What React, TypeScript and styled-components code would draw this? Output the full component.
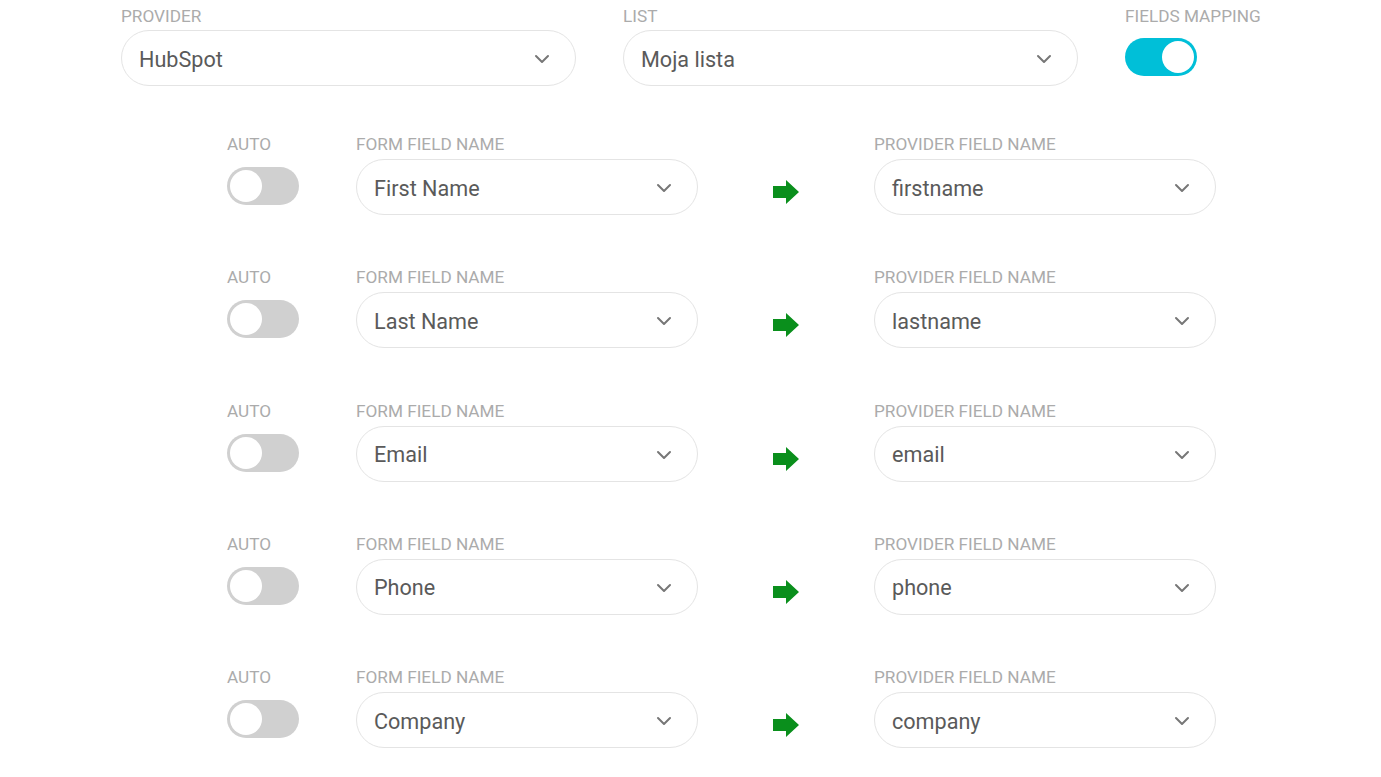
import React from 'react';
import styled, { createGlobalStyle } from 'styled-components';

const GlobalStyle = createGlobalStyle`
    html, body {
        margin: 0;
        padding: 0;
        background: #fff;
        font-family: Roboto, "Liberation Sans", Arial, sans-serif;
    }
`;

const mappings = [
    { form: 'First Name', provider: 'firstname' },
    { form: 'Last Name', provider: 'lastname' },
    { form: 'Email', provider: 'email' },
    { form: 'Phone', provider: 'phone' },
    { form: 'Company', provider: 'company' },
];

function Chevron() {
    return (
        <svg width="16" height="10" viewBox="0 0 16 10" fill="none">
            <path
                d="M2 2 L8 8 L14 2"
                stroke="#777"
                strokeWidth="2"
                strokeLinecap="round"
                strokeLinejoin="round"
            />
        </svg>
    );
}

function Arrow() {
    return (
        <svg width="26" height="24" viewBox="0 0 26 24">
            <path d="M0 6 H13 V0 L26 12 L13 24 V18 H0 Z" fill="#0a8f1c" />
        </svg>
    );
}

function Select({ value }: { value: string }) {
    return (
        <SelectBox>
            <SelectValue>{value}</SelectValue>
            <Chevron />
        </SelectBox>
    );
}

export default function App() {
    return (
        <Page>
            <GlobalStyle />
            <TopRow>
                <Field $width={455}>
                    <Label>Provider</Label>
                    <Select value="HubSpot" />
                </Field>
                <Field $width={455}>
                    <Label>List</Label>
                    <Select value="Moja lista" />
                </Field>
                <Field>
                    <Label>Fields mapping</Label>
                    <ToggleSlot>
                        <Toggle $on />
                    </ToggleSlot>
                </Field>
            </TopRow>
            <MappingList>
                {mappings.map((m) => (
                    <MappingRow key={m.form}>
                        <Field $width={129}>
                            <Label $tight>Auto</Label>
                            <ToggleSlot>
                                <Toggle />
                            </ToggleSlot>
                        </Field>
                        <Field $width={342}>
                            <Label $tight>Form field name</Label>
                            <Select value={m.form} />
                        </Field>
                        <ArrowCell>
                            <Arrow />
                        </ArrowCell>
                        <Field $width={342}>
                            <Label $tight>Provider field name</Label>
                            <Select value={m.provider} />
                        </Field>
                    </MappingRow>
                ))}
            </MappingList>
        </Page>
    );
}

const Page = styled.div`
    width: 1381px;
    height: 777px;
    overflow: hidden;
    padding-top: 6px;
    box-sizing: border-box;
`;

const TopRow = styled.div`
    display: flex;
    gap: 47px;
    padding-left: 121px;
`;

const Field = styled.div<{ $width?: number }>`
    display: flex;
    flex-direction: column;
    flex: none;
    width: ${(p) => (p.$width ? `${p.$width}px` : 'auto')};
`;

const Label = styled.div<{ $tight?: boolean }>`
    font-size: 17.2px;
    line-height: 20px;
    color: #ababab;
    text-transform: uppercase;
    margin-bottom: ${(p) => (p.$tight ? 5 : 4)}px;
    white-space: nowrap;
`;

const SelectBox = styled.div`
    height: 56px;
    box-sizing: border-box;
    border: 1px solid #e4e4e4;
    border-radius: 28px;
    background: #fff;
    display: flex;
    align-items: center;
    justify-content: space-between;
    padding: 2px 25px 0 17px;
`;

const SelectValue = styled.span`
    font-size: 21.6px;
    color: #5a5a5a;
`;

const ToggleSlot = styled.div`
    height: 56px;
    display: flex;
    align-items: center;
    padding-bottom: 2px;
    box-sizing: border-box;
`;

const Toggle = styled.div<{ $on?: boolean }>`
    position: relative;
    width: 72px;
    height: 38px;
    border-radius: 19px;
    background: ${(p) => (p.$on ? '#00bfd8' : '#d0d0d0')};

    &::after {
        content: '';
        position: absolute;
        top: 3px;
        left: ${(p) => (p.$on ? '37px' : '3px')};
        width: 32px;
        height: 32px;
        border-radius: 50%;
        background: #fff;
    }
`;

const MappingList = styled.div`
    display: flex;
    flex-direction: column;
    gap: 52.3px;
    margin-top: 48px;
    padding-left: 227px;
`;

const MappingRow = styled.div`
    display: flex;
`;

const ArrowCell = styled.div`
    width: 176px;
    flex: none;
    display: flex;
    justify-content: center;
    align-items: center;
    padding-top: 35px;
    box-sizing: border-box;
`;
